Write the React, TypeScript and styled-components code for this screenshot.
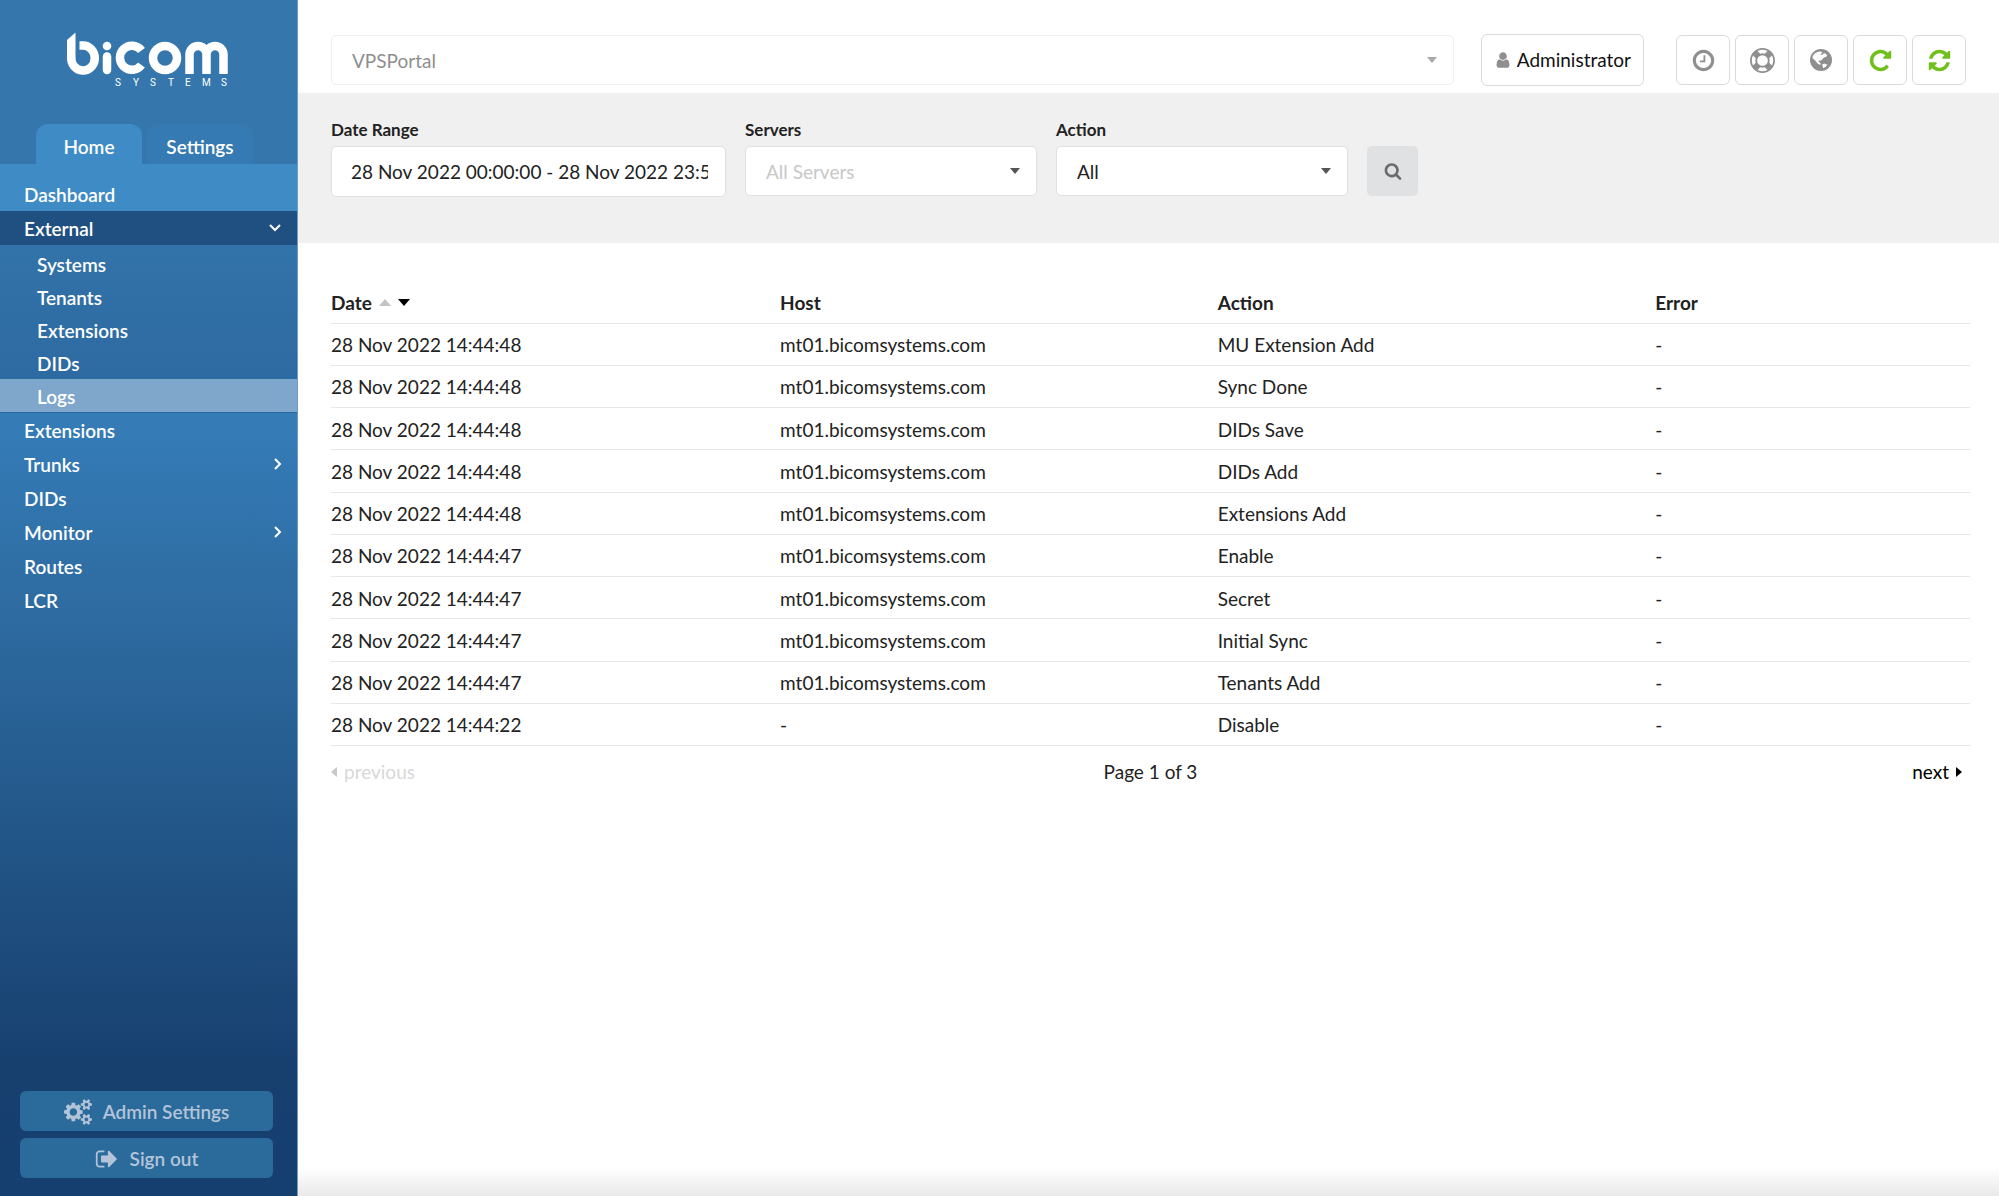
import React from "react";
import styled, { createGlobalStyle, css } from "styled-components";

const GlobalStyle = createGlobalStyle`
  *, *::before, *::after { box-sizing: border-box; }
  body {
    margin: 0;
    background: #fff;
    color: #222;
    font-family: Lato, "Open Sans", sans-serif;
    font-size: 19px;
    line-height: 24px;
  }
  button, input, select { font: inherit; color: inherit; margin: 0; }
  button { cursor: pointer; }
  a { color: inherit; text-decoration: none; }
`;

const Shell = styled.div`
  display: grid;
  grid-template-columns: 298px minmax(0, 1fr);
  min-height: 100vh;
`;

/* ---------- sidebar ---------- */

const Sidebar = styled.aside`
  display: flex;
  flex-direction: column;
  border-right: 1px solid #6f9cc4;
  background: #3577ac;
  color: #fff;
  font-weight: 600;
`;

const Brand = styled.a`
  display: flex;
  justify-content: center;
  height: 124px;
  padding: 32px 4px 0 0;
`;

const Tabs = styled.div`
  display: flex;
  gap: 5px;
  padding-left: 36px;
`;

const Tab = styled.button<{ $active?: boolean }>`
  width: 106px;
  height: 40px;
  padding: 6px 0 0;
  border: 0;
  border-radius: 12px 12px 0 0;
  background: ${(p) => (p.$active ? "#3e8bc5" : "#367ab3")};
  font-weight: 600;
`;

const Menu = styled.nav`
  display: flex;
  flex: 1;
  flex-direction: column;
  padding-top: 13px;
  background: linear-gradient(#3e8bc5 0, #3e8bc5 60px, #347ab5 280px, #2d6a9f 460px, #17406f 900px, #153f6f 1040px, #163c66 100%);
`;

const Item = styled.a<{ $open?: boolean }>`
  display: flex;
  align-items: center;
  justify-content: space-between;
  height: 34px;
  padding: 2px 14px 0 24px;
  background: ${(p) => (p.$open ? "#205081" : "transparent")};
`;

const SubMenu = styled.div`
  padding: 2px 0 1px;
  background: linear-gradient(#3273aa, #2c689f);
`;

const SubItem = styled.a<{ $current?: boolean }>`
  display: flex;
  align-items: center;
  height: 33px;
  padding: 2px 14px 0 37px;
  background: ${(p) => (p.$current ? "#7ea7cb" : "transparent")};
`;

const SideActions = styled.div`
  display: grid;
  gap: 7px;
  margin-top: auto;
  padding: 0 24px 18px 20px;
`;

const SideButton = styled.button`
  display: flex;
  align-items: center;
  justify-content: center;
  gap: 11px;
  height: 40px;
  padding: 2px 0 0;
  border: 0;
  border-radius: 6px;
  background: #2b6b9b;
  color: #b4c4d8;
  font-weight: 600;
`;

/* ---------- main column ---------- */

const Main = styled.main`
  display: flex;
  flex-direction: column;
  min-width: 0;
`;

const TopBar = styled.header`
  display: flex;
  align-items: center;
  height: 93px;
  padding: 27px 33px 0 33px;
`;

const SelectWrap = styled.div<{ $grow?: boolean }>`
  position: relative;
  display: flex;
  flex: ${(p) => (p.$grow ? "1" : "none")};

  svg {
    position: absolute;
    top: 22px;
    right: 17px;
    pointer-events: none;
  }
`;

const Select = styled.select<{ $tone: string; $line: string }>`
  appearance: none;
  width: 100%;
  height: 50px;
  padding: 2px 40px 0 20px;
  border: 1px solid ${(p) => p.$line};
  border-radius: 5px;
  background: #fff;
  color: ${(p) => p.$tone};
`;

const outlined = css`
  display: flex;
  align-items: center;
  justify-content: center;
  border: 1px solid #d9dadb;
  border-radius: 6px;
  background: #fff;
`;

const AccountButton = styled.button`
  ${outlined}
  gap: 5px;
  height: 52px;
  margin: 0 32px 0 27px;
  padding: 0 12px;
  color: #111;

  svg { color: #8f8f8f; }
`;

const Tools = styled.div`
  display: flex;
  gap: 5px;
`;

const ToolButton = styled.button<{ $green?: boolean }>`
  ${outlined}
  width: 54px;
  height: 50px;
  padding: 0;
  color: ${(p) => (p.$green ? "#6fc01b" : "#8f8f8f")};
`;

const Filters = styled.form`
  display: flex;
  align-items: flex-start;
  gap: 19px;
  height: 150px;
  padding: 25px 33px 0;
  background: #f0f0f0;
`;

const Field = styled.div<{ $width: number }>`
  display: flex;
  flex-direction: column;
  gap: 4px;
  width: ${(p) => p.$width}px;
`;

const Label = styled.label`
  font-size: 17px;
  font-weight: 700;
`;

const TextInput = styled.input`
  width: 100%;
  height: 51px;
  padding: 0 17px 0 19px;
  border: 1px solid #dfe0e1;
  border-radius: 5px;
  background: #fff;
`;

const SearchButton = styled.button`
  display: flex;
  align-items: center;
  justify-content: center;
  width: 51px;
  height: 50px;
  margin-top: 28px;
  border: 0;
  border-radius: 5px;
  background: #e0e1e2;
  color: #6b6b6c;
`;

const Content = styled.section`
  flex: 1;
  padding: 38px 29px 0 33px;
`;

const Table = styled.table`
  width: 100%;
  height: 465px;
  border-collapse: collapse;
  table-layout: fixed;

  th, td {
    height: 42px;
    padding: 2px 0 0;
    border-bottom: 1px solid #e6e8e8;
    text-align: left;
    white-space: nowrap;
  }
  th { font-weight: 700; }
`;

const SortLabel = styled.span`
  display: flex;
  align-items: center;
  gap: 7px;
`;

const Pager = styled.nav`
  display: grid;
  grid-template-columns: 1fr auto 1fr;
  align-items: center;
  padding-top: 14px;
`;

const PageButton = styled.button<{ $end?: boolean }>`
  display: flex;
  align-items: center;
  justify-self: ${(p) => (p.$end ? "end" : "start")};
  gap: 7px;
  padding: ${(p) => (p.$end ? "0 8px 0 0" : "0")};
  border: 0;
  background: none;
  color: #000;

  &:disabled { color: #d8d8d8; cursor: default; }
`;

const BottomFade = styled.div`
  height: 28px;
  background: linear-gradient(#fff, #e9e9e9);
`;

/* ---------- icons ---------- */

const paths = {
  clock:
    "M1024 544v448q0 14-9 23t-23 9h-320q-14 0-23-9t-9-23v-64q0-14 9-23t23-9h224v-352q0-14 9-23t23-9h64q14 0 23 9t9 23zm416 352q0-148-73-273t-198-198-273-73-273 73-198 198-73 273 73 273 198 198 273 73 273-73 198-198 73-273zm224 0q0 209-103 385.5t-279.5 279.5-385.5 103-385.5-103-279.5-279.5-103-385.5 103-385.5 279.5-279.5 385.5-103 385.5 103 279.5 279.5 103 385.5z",
  lifeRing:
    "M896 0q182 0 348 71t286 191 191 286 71 348-71 348-191 286-286 191-348 71-348-71-286-191-191-286-71-348 71-348 191-286 286-191 348-71zm0 128q-190 0-361 90l194 194q82-28 167-28t167 28l194-194q-171-90-361-90zm-678 1129l194-194q-28-82-28-167t28-167l-194-194q-90 171-90 361t90 361zm678 407q190 0 361-90l-194-194q-82 28-167 28t-167-28l-194 194q171 90 361 90zm0-384q159 0 271.5-112.5t112.5-271.5-112.5-271.5-271.5-112.5-271.5 112.5-112.5 271.5 112.5 271.5 271.5 112.5zm484-217l194 194q90-171 90-361t-90-361l-194 194q28 82 28 167t-28 167z",
  repeat:
    "M1664 256v448q0 26-19 45t-45 19h-448q-42 0-59-40-17-39 14-69l138-138q-148-137-349-137-104 0-198.5 40.5t-163.5 109.5-109.5 163.5-40.5 198.5 40.5 198.5 109.5 163.5 163.5 109.5 198.5 40.5q119 0 225-52t179-147q7-10 23-12 15 0 25 9l137 138q9 8 9.5 20.5t-7.5 22.5q-109 132-264 204.5t-327 72.5q-156 0-298-61t-245-164-164-245-61-298 61-298 164-245 245-164 298-61q147 0 284.5 55.5t244.5 156.5l130-129q29-31 70-14 39 17 39 59z",
  refresh:
    "M1639 1056q0 5-1 7-64 268-268 434.5t-478 166.5q-146 0-282.5-55t-243.5-157l-129 129q-19 19-45 19t-45-19-19-45v-448q0-26 19-45t45-19h448q26 0 45 19t19 45-19 45l-137 137q71 66 161 102t187 36q134 0 250-65t186-179q11-17 53-117 8-23 30-23h192q13 0 22.5 9.5t9.5 22.5zm25-800v448q0 26-19 45t-45 19h-448q-26 0-45-19t-19-45 19-45l138-138q-148-137-349-137-134 0-250 65t-186 179q-11 17-53 117-8 23-30 23h-199q-13 0-22.5-9.5t-9.5-22.5v-7q65-268 270-434.5t480-166.5q146 0 284 55.5t245 156.5l130-129q19-19 45-19t45 19 19 45z",
  search:
    "M1216 832q0-185-131.5-316.5t-316.5-131.5-316.5 131.5-131.5 316.5 131.5 316.5 316.5 131.5 316.5-131.5 131.5-316.5zm512 832q0 52-38 90t-90 38q-54 0-90-38l-343-342q-179 124-399 124-143 0-273.5-55.5t-225-150-150-225-55.5-273.5 55.5-273.5 150-225 225-150 273.5-55.5 273.5 55.5 225 150 150 225 55.5 273.5q0 220-124 399l343 343q37 37 37 90z",
  user:
    "M1536 1399q0 109-62.5 187t-150.5 78h-854q-88 0-150.5-78t-62.5-187q0-85 8.5-160.5t31.5-152 58.5-131 94-89 134.5-34.5q131 128 313 128t313-128q76 0 134.5 34.5t94 89 58.5 131 31.5 152 8.5 160.5zm-256-887q0 159-112.5 271.5t-271.5 112.5-271.5-112.5-112.5-271.5 112.5-271.5 271.5-112.5 271.5 112.5 112.5 271.5z",
  cogs:
    "M896 896q0-106-75-181t-181-75-181 75-75 181 75 181 181 75 181-75 75-181zm768 512q0-52-38-90t-90-38-90 38-38 90q0 53 37.5 90.5t90.5 37.5 90.5-37.5 37.5-90.5zm0-1024q0-52-38-90t-90-38-90 38-38 90q0 53 37.5 90.5t90.5 37.5 90.5-37.5 37.5-90.5zm-384 421v185q0 10-7 19.5t-16 10.5l-155 24q-11 35-32 76 34 48 90 115 7 11 7 20 0 12-7 19-23 30-82.5 89.5t-78.5 59.5q-11 0-21-7l-115-90q-37 19-77 31-11 108-23 155-7 24-30 24h-186q-11 0-20-7.5t-10-17.5l-23-153q-34-10-75-31l-118 89q-7 7-20 7-11 0-21-8-144-133-144-160 0-9 7-19 10-14 41-53t47-61q-23-44-35-82l-152-24q-10-1-17-9.5t-7-19.5v-185q0-10 7-19.5t16-10.5l155-24q11-35 32-76-34-48-90-115-7-11-7-20 0-12 7-20 22-30 82-89t79-59q11 0 21 7l115 90q34-18 77-32 11-108 23-154 7-24 30-24h186q11 0 20 7.5t10 17.5l23 153q34 10 75 31l118-89q8-7 20-7 11 0 21 8 144 133 144 160 0 8-7 19-12 16-42 54t-45 60q23 48 34 82l152 23q10 2 17 10.5t7 19.5zm640 533v140q0 16-149 31-12 27-30 52 51 113 51 138 0 4-4 7-122 71-124 71-8 0-46-47t-52-68q-20 2-30 2t-30-2q-14 21-52 68t-46 47q-2 0-124-71-4-3-4-7 0-25 51-138-18-25-30-52-149-15-149-31v-140q0-16 149-31 13-29 30-52-51-113-51-138 0-4 4-7 4-2 35-20t59-34 30-16q8 0 46 46.5t52 67.5q20-2 30-2t30 2q51-71 92-112l6-2q4 0 124 70 4 3 4 7 0 25-51 138 17 23 30 52 149 15 149 31zm0-1024v140q0 16-149 31-12 27-30 52 51 113 51 138 0 4-4 7-122 71-124 71-8 0-46-47t-52-68q-20 2-30 2t-30-2q-14 21-52 68t-46 47q-2 0-124-71-4-3-4-7 0-25 51-138-18-25-30-52-149-15-149-31v-140q0-16 149-31 13-29 30-52-51-113-51-138 0-4 4-7 4-2 35-20t59-34 30-16q8 0 46 46.5t52 67.5q20-2 30-2t30 2q51-71 92-112l6-2q4 0 124 70 4 3 4 7 0 25-51 138 17 23 30 52 149 15 149 31z",
  signOut:
    "M704 1440q0 4 1 20t.5 26.5-3 23.5-10 19.5-20.5 6.5h-320q-119 0-203.5-84.5t-84.5-203.5v-704q0-119 84.5-203.5t203.5-84.5h320q13 0 22.5 9.5t9.5 22.5q0 4 1 20t.5 26.5-3 23.5-10 19.5-20.5 6.5h-320q-66 0-113 47t-47 113v704q0 66 47 113t113 47h312l11.5 1 11.5 3 8 5.5 7 9 2 13.5zm928-544q0 26-19 45l-544 544q-19 19-45 19t-45-19-19-45v-288h-448q-26 0-45-19t-19-45v-384q0-26 19-45t45-19h448v-288q0-26 19-45t45-19 45 19l544 544q19 19 19 45z",
};

function Icon({ name, size, wide }: { name: keyof typeof paths; size: number; wide?: boolean }) {
  return (
    <svg
      width={wide ? Math.round((size * 15) / 14) : size}
      height={size}
      viewBox={`0 0 ${wide ? 1920 : 1792} 1792`}
      fill="currentColor"
      aria-hidden="true"
    >
      <path d={paths[name]} />
    </svg>
  );
}

function Globe() {
  return (
    <svg width="22" height="22" viewBox="0 0 22 22" aria-hidden="true">
      <circle cx="11" cy="11" r="11" fill="currentColor" />
      <path
        fill="#fff"
        d="M3 6.500 5 4.200 7.500 3 10 2.500 12.500 3 11.500 4.500 10.200 5.200 12 6 14 4.200 15.500 4.600 17.200 6.500 16 8 13.800 8.600 12.400 10.200 11 11.400 9.400 11.400 8.400 12.600 9.600 13.600 10.800 14.600 10.200 16 7.600 14.400 5.600 12 3.800 10.200 2.400 9z"
      />
      <path fill="#fff" d="M12.200 15.400 14.400 14.600 16.400 15.400 17.600 15.600 15.800 17.800 13.200 19.200 12.600 17.200z" />
    </svg>
  );
}

const arrows = {
  up: { w: 12, h: 7, points: "0,7 6,0 12,7" },
  down: { w: 12, h: 7, points: "0,0 12,0 6,7" },
  left: { w: 6, h: 10, points: "6,0 6,10 0,5" },
  right: { w: 6, h: 10, points: "0,0 6,5 0,10" },
  caret: { w: 10, h: 6, points: "0,0 10,0 5,6" },
};

function Arrow({ dir, color }: { dir: keyof typeof arrows; color: string }) {
  const a = arrows[dir];
  return (
    <svg width={a.w} height={a.h} viewBox={`0 0 ${a.w} ${a.h}`} aria-hidden="true">
      <polygon points={a.points} fill={color} />
    </svg>
  );
}

function Chevron({ open }: { open?: boolean }) {
  return (
    <svg width="16" height="16" viewBox="0 0 16 16" fill="none" stroke="#fff" strokeWidth="2" aria-hidden="true">
      <path d={open ? "M3 4l5 5 5-5" : "M8 2l5 5-5 5"} />
    </svg>
  );
}

function Logo() {
  return (
    <svg width="163" height="58" viewBox="0 0 163 58" role="img" aria-label="bicom systems">
      <path d="M2 8 10.500 0.500V26H2z" fill="#fff" />
      <g fill="none" stroke="#fff" strokeWidth="8.500">
        <path d="M6.250 25a11.800 12.500 0 1 0 11.750-11.500h-3.500" />
        <path d="M42 24.500v13.500" strokeLinecap="round" />
        <path d="M76.500 18.500a12 12 0 1 0 0 14.500" />
        <circle cx="100" cy="26" r="12" />
        <path d="M124.500 42V22.500a8.500 8.500 0 0 1 17 0V42M141.500 22.500a8.500 8.500 0 0 1 17 0V42" />
      </g>
      <circle cx="42" cy="14" r="4.300" fill="#fff" />
      <text y="54" fill="#fff" fontFamily="Roboto, sans-serif" fontSize="10" fontWeight="400" x="50 68 85 103 120 137 156">SYSTEMS</text>
    </svg>
  );
}

/* ---------- data ---------- */

const HOST = "mt01.bicomsystems.com";
const rows: [string, string, string][] = [
  ["14:44:48", HOST, "MU Extension Add"],
  ["14:44:48", HOST, "Sync Done"],
  ["14:44:48", HOST, "DIDs Save"],
  ["14:44:48", HOST, "DIDs Add"],
  ["14:44:48", HOST, "Extensions Add"],
  ["14:44:47", HOST, "Enable"],
  ["14:44:47", HOST, "Secret"],
  ["14:44:47", HOST, "Initial Sync"],
  ["14:44:47", HOST, "Tenants Add"],
  ["14:44:22", "-", "Disable"],
];

const Column = styled.col<{ $share?: string }>`
  width: ${(p) => p.$share ?? "auto"};
`;

export default function App() {
  return (
    <>
      <GlobalStyle />
      <Shell>
        <Sidebar>
          <Brand href="#"><Logo /></Brand>
          <Tabs>
            <Tab $active>Home</Tab>
            <Tab>Settings</Tab>
          </Tabs>
          <Menu>
            <Item href="#">Dashboard</Item>
            <Item href="#" $open>External<Chevron open /></Item>
            <SubMenu>
              {["Systems", "Tenants", "Extensions", "DIDs", "Logs"].map((t) => (
                <SubItem key={t} href="#" $current={t === "Logs"}>{t}</SubItem>
              ))}
            </SubMenu>
            <Item href="#">Extensions</Item>
            <Item href="#">Trunks<Chevron /></Item>
            <Item href="#">DIDs</Item>
            <Item href="#">Monitor<Chevron /></Item>
            <Item href="#">Routes</Item>
            <Item href="#">LCR</Item>
            <SideActions>
              <SideButton><Icon name="cogs" size={26} wide />Admin Settings</SideButton>
              <SideButton><Icon name="signOut" size={24} />Sign out</SideButton>
            </SideActions>
          </Menu>
        </Sidebar>

        <Main>
          <TopBar>
            <SelectWrap $grow>
              <Select aria-label="Portal" $tone="#8e8e8e" $line="#efefef">
                <option>VPSPortal</option>
              </Select>
              <Arrow dir="caret" color="#a9a9a9" />
            </SelectWrap>
            <AccountButton><Icon name="user" size={18} />Administrator</AccountButton>
            <Tools>
              <ToolButton aria-label="History"><Icon name="clock" size={25} /></ToolButton>
              <ToolButton aria-label="Help"><Icon name="lifeRing" size={25} /></ToolButton>
              <ToolButton aria-label="Language"><Globe /></ToolButton>
              <ToolButton aria-label="Reload" $green><Icon name="repeat" size={25} /></ToolButton>
              <ToolButton aria-label="Synchronise" $green><Icon name="refresh" size={25} /></ToolButton>
            </Tools>
          </TopBar>

          <Filters>
            <Field $width={395}>
              <Label htmlFor="range">Date Range</Label>
              <TextInput id="range" defaultValue="28 Nov 2022 00:00:00 - 28 Nov 2022 23:59:59" />
            </Field>
            <Field $width={292}>
              <Label htmlFor="servers">Servers</Label>
              <SelectWrap>
                <Select id="servers" $tone="#c8c8c8" $line="#dfe0e1"><option>All Servers</option></Select>
                <Arrow dir="caret" color="#555" />
              </SelectWrap>
            </Field>
            <Field $width={292}>
              <Label htmlFor="action">Action</Label>
              <SelectWrap>
                <Select id="action" $tone="#222" $line="#dfe0e1"><option>All</option></Select>
                <Arrow dir="caret" color="#555" />
              </SelectWrap>
            </Field>
            <SearchButton type="button" aria-label="Search"><Icon name="search" size={18} /></SearchButton>
          </Filters>

          <Content>
            <Table>
              <colgroup>
                <Column $share="27.4%" />
                <Column $share="26.7%" />
                <Column $share="26.7%" />
                <Column />
              </colgroup>
              <thead>
                <tr>
                  <th scope="col" aria-sort="descending">
                    <SortLabel>Date<Arrow dir="up" color="#c4c4c4" /><Arrow dir="down" color="#000" /></SortLabel>
                  </th>
                  <th scope="col">Host</th>
                  <th scope="col">Action</th>
                  <th scope="col">Error</th>
                </tr>
              </thead>
              <tbody>
                {rows.map(([time, host, action], i) => (
                  <tr key={i}>
                    <td>28 Nov 2022 {time}</td>
                    <td>{host}</td>
                    <td>{action}</td>
                    <td>-</td>
                  </tr>
                ))}
              </tbody>
            </Table>
            <Pager aria-label="Pages">
              <PageButton disabled><Arrow dir="left" color="#c8c8c8" />previous</PageButton>
              <span>Page 1 of 3</span>
              <PageButton $end>next<Arrow dir="right" color="#000" /></PageButton>
            </Pager>
          </Content>
          <BottomFade />
        </Main>
      </Shell>
    </>
  );
}
